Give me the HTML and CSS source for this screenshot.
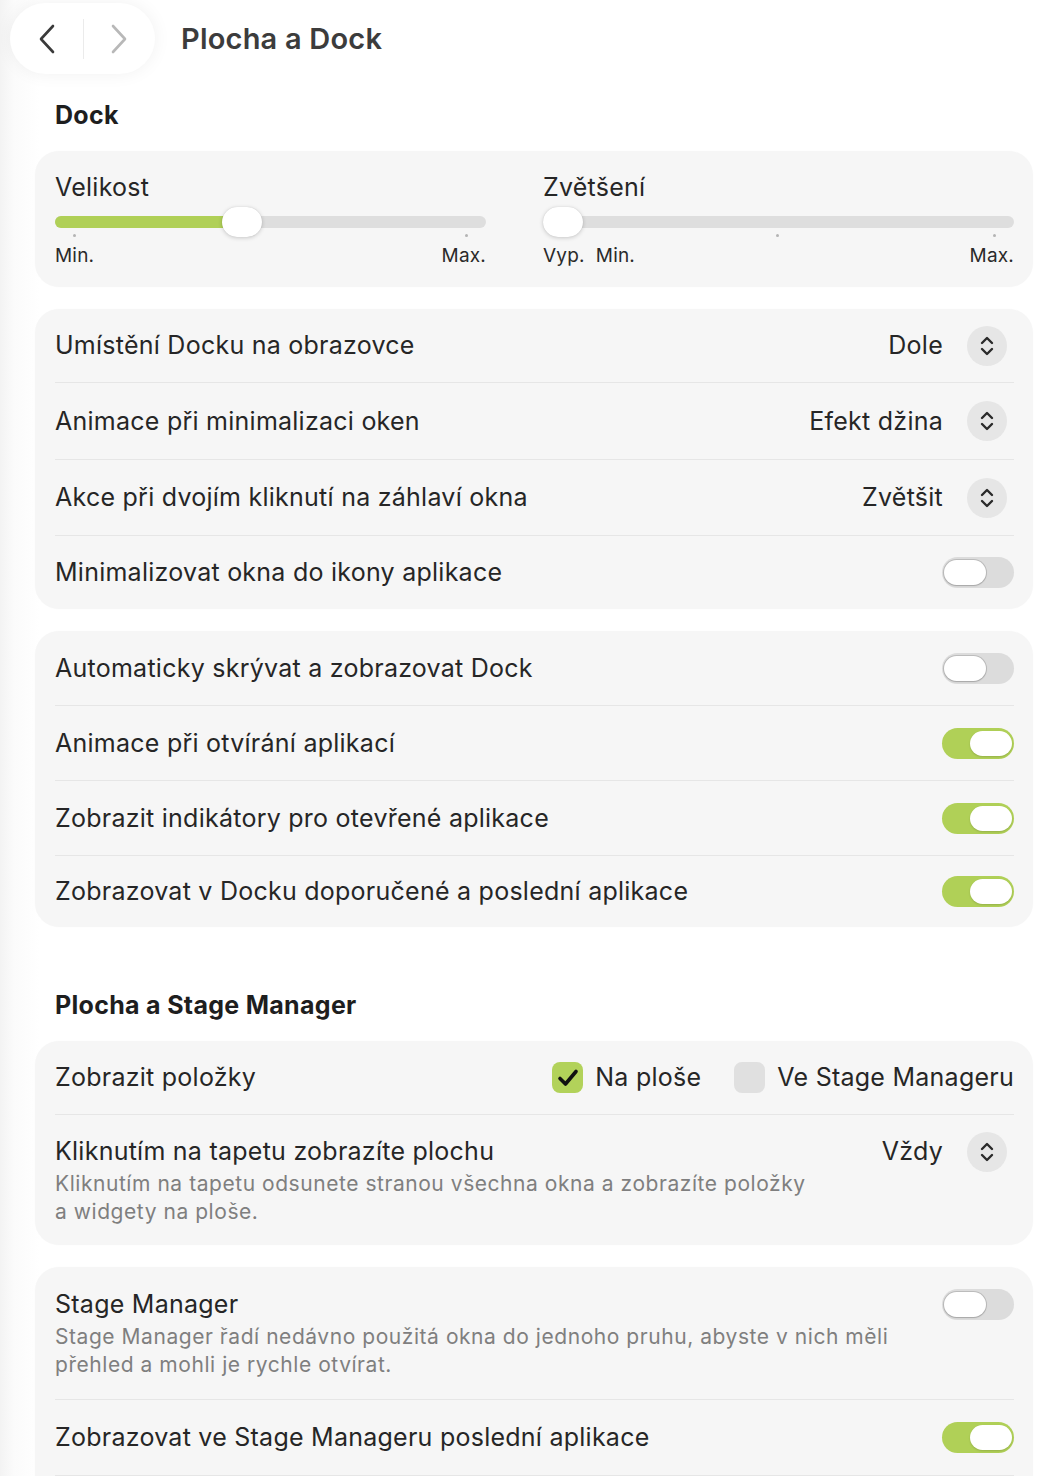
FILE: index.html
```html
<!DOCTYPE html>
<html lang="cs">
<head>
<meta charset="utf-8">
<title>Plocha a Dock</title>
<link rel="stylesheet" href="styles.css">
</head>
<body>
<div class="page">
  <header class="topbar">
    <div class="navpill">
      <svg class="chev" width="22" height="32" viewBox="0 0 22 32"><path d="M16 3 L4 16 L16 29" fill="none" stroke="#3a3a3a" stroke-width="2.6" stroke-linecap="round" stroke-linejoin="round"/></svg>
      <span class="navdiv"></span>
      <svg class="chev" width="22" height="32" viewBox="0 0 22 32"><path d="M6 3 L18 16 L6 29" fill="none" stroke="#b8b8b8" stroke-width="2.6" stroke-linecap="round" stroke-linejoin="round"/></svg>
    </div>
    <h1 class="title">Plocha a Dock</h1>
  </header>

  <main class="content">
    <h2 class="section">Dock</h2>

    <section class="card sliders">
      <div class="slidercol">
        <div class="label">Velikost</div>
        <div class="slider">
          <div class="track"><div class="fill" style="width:182px"></div></div>
          <span class="knob" style="left:167px"></span>
          <span class="tick" style="left:18px"></span>
          <span class="tick" style="left:410px"></span>
        </div>
        <div class="scale"><span>Min.</span><span>Max.</span></div>
      </div>
      <div class="slidercol">
        <div class="label">Zvětšení</div>
        <div class="slider">
          <div class="track"></div>
          <span class="knob" style="left:0"></span>
          <span class="tick" style="left:233px"></span>
          <span class="tick" style="left:450px"></span>
        </div>
        <div class="scale"><span>Vyp.&nbsp; Min.</span><span>Max.</span></div>
      </div>
    </section>

    <section class="card popups">
      <div class="row"><span class="rlabel">Umístění Docku na obrazovce</span><span class="value">Dole</span><span class="stepper"><svg width="16" height="24" viewBox="0 0 16 24"><path d="M3 9 L8 4 L13 9 M3 15 L8 20 L13 15" fill="none" stroke="#2a2a2a" stroke-width="2.4" stroke-linecap="round" stroke-linejoin="round"/></svg></span></div>
      <div class="row"><span class="rlabel">Animace při minimalizaci oken</span><span class="value">Efekt džina</span><span class="stepper"><svg width="16" height="24" viewBox="0 0 16 24"><path d="M3 9 L8 4 L13 9 M3 15 L8 20 L13 15" fill="none" stroke="#2a2a2a" stroke-width="2.4" stroke-linecap="round" stroke-linejoin="round"/></svg></span></div>
      <div class="row"><span class="rlabel">Akce při dvojím kliknutí na záhlaví okna</span><span class="value">Zvětšit</span><span class="stepper"><svg width="16" height="24" viewBox="0 0 16 24"><path d="M3 9 L8 4 L13 9 M3 15 L8 20 L13 15" fill="none" stroke="#2a2a2a" stroke-width="2.4" stroke-linecap="round" stroke-linejoin="round"/></svg></span></div>
      <div class="row"><span class="rlabel">Minimalizovat okna do ikony aplikace</span><span class="toggle"><span class="tknob"></span></span></div>
    </section>

    <section class="card compact">
      <div class="row"><span class="rlabel">Automaticky skrývat a zobrazovat Dock</span><span class="toggle"><span class="tknob"></span></span></div>
      <div class="row"><span class="rlabel">Animace při otvírání aplikací</span><span class="toggle on"><span class="tknob"></span></span></div>
      <div class="row"><span class="rlabel">Zobrazit indikátory pro otevřené aplikace</span><span class="toggle on"><span class="tknob"></span></span></div>
      <div class="row"><span class="rlabel">Zobrazovat v Docku doporučené a poslední aplikace</span><span class="toggle on"><span class="tknob"></span></span></div>
    </section>

    <h2 class="section section2">Plocha a Stage Manager</h2>

    <section class="card">
      <div class="row short">
        <span class="rlabel">Zobrazit položky</span>
        <span class="check on"><svg width="22" height="20" viewBox="0 0 22 20"><path d="M3 10.5 L8.5 16 L19 3.5" fill="none" stroke="#111" stroke-width="3.6" stroke-linecap="round" stroke-linejoin="round"/></svg></span>
        <span class="checklabel">Na ploše</span>
        <span class="check"></span>
        <span class="checklabel last">Ve Stage Manageru</span>
      </div>
      <div class="row tall">
        <div class="textblock">
          <div class="rlabel">Kliknutím na tapetu zobrazíte plochu</div>
          <div class="desc">Kliknutím na tapetu odsunete stranou všechna okna a zobrazíte položky<br>a widgety na ploše.</div>
        </div>
        <span class="value">Vždy</span><span class="stepper"><svg width="16" height="24" viewBox="0 0 16 24"><path d="M3 9 L8 4 L13 9 M3 15 L8 20 L13 15" fill="none" stroke="#2a2a2a" stroke-width="2.4" stroke-linecap="round" stroke-linejoin="round"/></svg></span>
      </div>
    </section>

    <section class="card lastcard">
      <div class="row tall sm">
        <div class="textblock">
          <div class="rlabel">Stage Manager</div>
          <div class="desc">Stage Manager řadí nedávno použitá okna do jednoho pruhu, abyste v nich měli<br>přehled a mohli je rychle otvírat.</div>
        </div>
        <span class="toggle"><span class="tknob"></span></span>
      </div>
      <div class="row divided"><span class="rlabel">Zobrazovat ve Stage Manageru poslední aplikace</span><span class="toggle on"><span class="tknob"></span></span></div>
      <div class="more"></div>
    </section>
  </main>
</div>
</body>
</html>
```
FILE: styles.css
```css
* { box-sizing: border-box; }
html, body { margin: 0; padding: 0; }
body {
  background: linear-gradient(90deg, #f3f3f3 0, #fbfbfb 14px, #ffffff 40px);
  font-family: Inter, "Noto Sans", "Liberation Sans", sans-serif;
  color: #262626;
  height: 1476px;
  overflow: hidden;
}
.page { width: 1062px; }

.topbar {
  display: flex;
  align-items: center;
  padding: 2px 0 0 10px;
  height: 75px;
}
.navpill {
  width: 145px;
  height: 71px;
  border-radius: 36px;
  background: #fff;
  box-shadow: 0 0 18px rgba(0,0,0,0.06);
  display: flex;
  align-items: center;
  justify-content: space-between;
  padding: 0 26px 0 27px;
}
.navdiv { width: 1px; height: 40px; background: #ebebeb; }
.chev { display: block; }
.title {
  margin: 0 0 0 26px;
  font-size: 29px;
  font-weight: 600;
  color: #3c3c3c;
  letter-spacing: 0.2px;
}

.content { padding: 0 29px 0 35px; }
.section {
  margin: 0;
  padding: 26px 0 0 20px;
  height: 76px;
  font-size: 25px;
  font-weight: 700;
  color: #1e1e1e;
  line-height: 29px;
  letter-spacing: 0.3px;
}
.section2 { padding-top: 42px; height: 92px; }

.card {
  background: #f6f6f6;
  border-radius: 24px;
  padding: 0 19px 0 20px;
  margin-bottom: 22px;
  box-shadow: 0 0 2px rgba(0,0,0,0.02);
}

.sliders {
  display: grid;
  grid-template-columns: 431px 1fr;
  column-gap: 57px;
  padding-top: 22px;
  height: 136px;
}
.label { font-size: 25px; line-height: 29px; letter-spacing: 0.25px; }
.slider { position: relative; height: 40px; margin-top: 0; }
.track {
  position: absolute;
  left: 0; right: 0; top: 14px;
  height: 12px;
  border-radius: 6px;
  background: #dedede;
  overflow: hidden;
}
.fill { height: 100%; background: #b0d057; }
.knob {
  position: absolute;
  top: 5px;
  width: 40px;
  height: 30px;
  border-radius: 15px;
  background: #fff;
  box-shadow: 0 1px 4px rgba(0,0,0,0.18), 0 0 1px rgba(0,0,0,0.15);
}
.tick {
  position: absolute;
  top: 32px;
  width: 3px; height: 3px;
  border-radius: 50%;
  background: #b4b4b4;
}
.scale {
  display: flex;
  justify-content: space-between;
  font-size: 19px;
  line-height: 24px;
  margin-top: 2px;
  color: #2a2a2a;
  letter-spacing: 0.2px;
}

.row {
  display: flex;
  align-items: center;
  height: 75px;
  border-bottom: 1px solid #e6e6e6;
}
.card .row:last-child { border-bottom: none; }
.popups .row:nth-child(1) { height: 74px; }
.popups .row:nth-child(2) { height: 77px; }
.popups .row:nth-child(3) { height: 76px; }
.popups .row:nth-child(4) { height: 73px; }
.compact .row:last-child { height: 71px; }
.rlabel { font-size: 25px; line-height: 29px; flex: 1; letter-spacing: 0.25px; }
.value { font-size: 25px; line-height: 29px; margin-right: 24px; letter-spacing: 0.25px; }
.stepper {
  width: 40px; height: 40px;
  border-radius: 50%;
  background: #e6e6e6;
  display: flex; align-items: center; justify-content: center;
  margin-right: 7px;
}
.stepper svg { display: block; }

.toggle {
  width: 72px; height: 31px;
  border-radius: 16px;
  background: #dcdcdc;
  position: relative;
  flex: none;
}
.tknob {
  position: absolute;
  left: 2px; top: 3px;
  width: 42px; height: 25px;
  border-radius: 13px;
  background: #fff;
  box-shadow: 0 0 0 1px rgba(0,0,0,0.14), 0 1px 2px rgba(0,0,0,0.12);
}
.toggle.on { background: #b0d057; }
.toggle.on .tknob { left: 28px; box-shadow: 0 1px 2px rgba(0,0,0,0.15); }

.row.short { height: 74px; }
.check {
  width: 31px; height: 31px;
  border-radius: 8px;
  background: #e0e0e0;
  display: flex; align-items: center; justify-content: center;
  flex: none;
}
.check.on { background: #b2d25a; }
.check svg { display: block; }
.checklabel { font-size: 25px; line-height: 29px; margin: 0 33px 0 12px; letter-spacing: 0.25px; }
.checklabel.last { margin-right: 0; }

.row.tall {
  height: auto;
  align-items: flex-start;
  padding: 22px 0 19px;
}
.row.tall .stepper { margin-top: -5px; }
.row.tall.sm { padding: 23px 0 20px; }
.textblock { flex: 1; }
.desc {
  font-size: 21px;
  line-height: 28px;
  color: #7f7f7f;
  margin-top: 4px;
  letter-spacing: 0.55px;
}
.row.tall.sm .toggle { margin-top: -1px; }
.card .row.divided { border-bottom: 1px solid #e6e6e6; height: 76px; }
.more { height: 60px; }
```
